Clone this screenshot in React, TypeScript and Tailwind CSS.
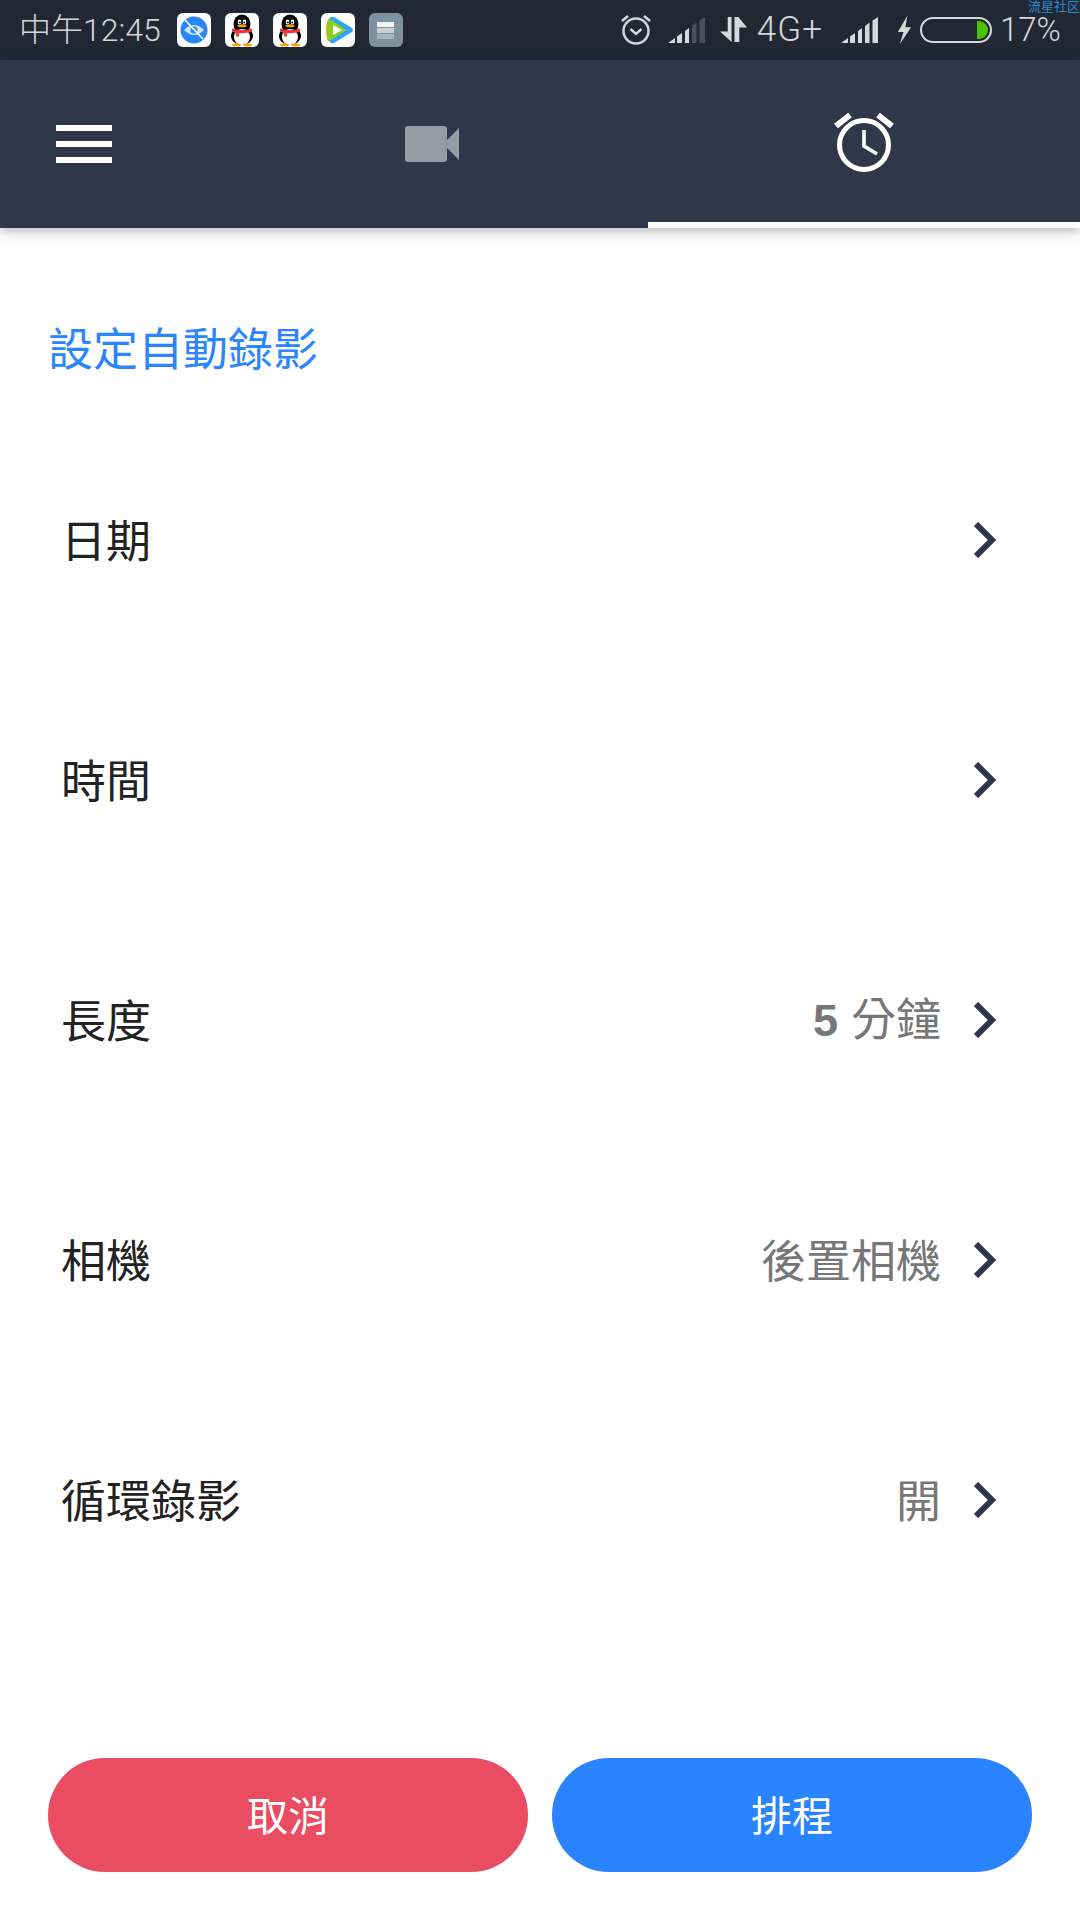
import React from 'react';

const cjk = { fontFamily: '"Noto Sans CJK TC", "Noto Sans", sans-serif' };

const rows = [
  { label: '日期', value: null },
  { label: '時間', value: null },
  { label: '長度', value: '5 分鐘' },
  { label: '相機', value: '後置相機' },
  { label: '循環錄影', value: '開' },
];

const AppTile: React.FC<{ children: React.ReactNode }> = ({ children }) => (
  <div className="w-[34px] h-[34px] rounded-[6px] overflow-hidden bg-white">
    <svg viewBox="0 0 34 34" className="w-full h-full">{children}</svg>
  </div>
);

const Penguin = () => (
  <>
    <ellipse cx="17" cy="23" rx="11" ry="9" fill="#000" />
    <ellipse cx="17" cy="11" rx="8.5" ry="9.5" fill="#000" />
    <ellipse cx="17" cy="24" rx="8" ry="8" fill="#fff" />
    <ellipse cx="14.5" cy="9" rx="1.8" ry="2.4" fill="#fff" />
    <ellipse cx="19.5" cy="9" rx="1.8" ry="2.4" fill="#fff" />
    <circle cx="14.8" cy="9.4" r="0.9" fill="#000" />
    <circle cx="19.2" cy="9.4" r="0.9" fill="#000" />
    <ellipse cx="17" cy="12.8" rx="4.6" ry="1.5" fill="#f5a40c" />
    <path d="M7 15.5 Q17 18.5 27 15.5 L27 19 Q20 20.5 14 20 L14 23.5 L11 23.5 L11 19.5 L7 18.5 Z" fill="#ef3b36" />
    <ellipse cx="11.5" cy="32" rx="4.5" ry="1.4" fill="#f5a40c" />
    <ellipse cx="22.5" cy="32" rx="4.5" ry="1.4" fill="#f5a40c" />
  </>
);

const Signal: React.FC<{ dim?: boolean }> = ({ dim }) => (
  <svg width="37" height="26" viewBox="0 0 37 26">
    <path d="M0 26 L7 21 L7 26 Z" fill="#d6d8db" />
    <path d="M9 19.5 L14 16 L14 26 L9 26 Z" fill="#d6d8db" />
    <path d="M17 14 L21 11 L21 26 L17 26 Z" fill="#d6d8db" />
    <path d="M24 9 L28.5 5.5 L28.5 26 L24 26 Z" fill={dim ? '#4a505c' : '#d6d8db'} />
    <path d="M31.5 3.5 L37 0 L37 26 L31.5 26 Z" fill={dim ? '#4a505c' : '#d6d8db'} />
  </svg>
);

const StatusBar = () => (
  <div className="relative h-[60px] bg-[#212833] flex items-center justify-between pl-[19px] pr-[19px] text-[#d4d6d9]">
    <span className="absolute top-[1px] right-0 text-[13px] leading-[12px] text-[#2a8ad8]" style={{ fontFamily: '"Liberation Sans", "Noto Sans CJK SC", sans-serif' }}>流星社区</span>
    <div className="flex items-center">
      <span className="text-[32px] leading-none font-light mr-[16px]" style={{ fontFamily: 'Roboto, "Noto Sans CJK SC", sans-serif' }}>中午12:45</span>
      <div className="flex items-center gap-[14px]">
        <AppTile>
          <circle cx="17" cy="17" r="13.5" fill="#2a85f5" />
          <path d="M7 17 Q17 7 27 17 Q17 27 7 17 Z" fill="#cfe2fb" />
          <circle cx="17" cy="17" r="3.6" fill="#2a85f5" />
          <path d="M8 7 L26 26" stroke="#fff" strokeWidth="1.6" />
        </AppTile>
        <AppTile><Penguin /></AppTile>
        <AppTile><Penguin /></AppTile>
        <AppTile>
          <path d="M7 6 Q3 17 7 28 L12 28 L12 6 Z" fill="#f98c0c" />
          <path d="M8 8 Q8 3 13 4 L31 15 Q33 17 31 19 L13 30 Q8 31 8 26 Z" fill="#2ea6f5" />
          <path d="M6 10 Q6 6 10 7 L24 16 Q26 17 24 18 L10 27 Q6 28 6 24 Z" fill="#8ccf1e" />
          <path d="M12 12 L21 17 L12 22 Z" fill="#fff" />
        </AppTile>
        <div className="w-[34px] h-[34px] rounded-[6px] bg-[#7e919e] flex flex-col items-center justify-center gap-[1px]">
          <div className="w-[17px] h-[5px] bg-[#f2f4f5]" />
          <div className="w-[17px] h-[5px] bg-[#c9d1d6]" />
          <div className="w-[17px] h-[5px] bg-[#a9b5bd]" />
        </div>
      </div>
    </div>
    <div className="flex items-center">
      <svg width="32" height="32" viewBox="0 0 32 32" className="mr-[16px] mb-[2px]" fill="none" stroke="#d6d8db">
        <circle cx="16" cy="18" r="12.5" strokeWidth="2.4" />
        <path d="M10.5 16 L16 21 L21.5 16" strokeWidth="2.4" />
        <path d="M2 8 L8 3 M24 3 L30 8" strokeWidth="2.6" />
      </svg>
      <Signal dim />
      <svg width="27" height="27" viewBox="0 0 28 28" className="ml-[15px] mr-[10px]" fill="#d6d8db">
        <path d="M8 0 H12 V26 L0 15 H8 Z" />
        <path d="M15 26 V0 H19 L28 11 H20 V26 Z" />
      </svg>
      <span className="text-[35px] leading-[30px] font-light tracking-[1px] mr-[18px]" style={{ fontFamily: 'Roboto, sans-serif' }}>4G+</span>
      <Signal />
      <svg width="17" height="30" viewBox="0 0 18 30" className="ml-[18px] mr-[7px]" fill="#d6d8db">
        <path d="M12 0 L2 17 H8 L4 30 L16 12 H10 Z" />
      </svg>
      <div className="w-[72px] h-[26px] rounded-full border-[2px] border-[#d6d8db] flex justify-end items-center pr-[2px] mr-[8px]">
        <div className="w-[11px] h-[18px] bg-[#4bc400] rounded-r-[9px]" />
      </div>
      <span className="text-[33px] leading-[30px] font-light" style={{ fontFamily: 'Roboto, sans-serif' }}>17%</span>
    </div>
  </div>
);

const Header = () => (
  <div className="relative h-[168px] bg-[#2f3849] grid grid-cols-[216px_432px_432px] shadow-[0_4px_10px_rgba(0,0,0,0.25)]">
    <div className="flex items-center pl-[56px]">
      <div className="w-[56px] flex flex-col gap-[10px]">
        <div className="h-[6px] bg-white" />
        <div className="h-[6px] bg-white" />
        <div className="h-[6px] bg-white" />
      </div>
    </div>
    <div className="flex items-center justify-center">
      <svg width="54" height="36" viewBox="0 0 54 36" fill="#979ba3">
        <rect width="42" height="36" rx="3" />
        <path d="M42 14 L54 2 V34 L42 22 Z" />
      </svg>
    </div>
    <div className="flex items-center justify-center border-b-[6px] border-white">
      <svg width="60" height="60" viewBox="0 0 60 60" fill="none" stroke="#fff" className="mt-[2px]">
        <circle cx="30" cy="33" r="24.5" strokeWidth="5" />
        <path d="M30 18 V34 L43 42" strokeWidth="3.6" />
        <path d="M2 14 L16 3 M44 3 L58 14" strokeWidth="6" />
      </svg>
    </div>
  </div>
);

export default function App() {
  return (
    <div className="w-[1080px] h-[1920px] bg-white flex flex-col overflow-hidden" style={cjk}>
      <StatusBar />
      <Header />
      <div className="h-[192px] flex items-end pl-[48px] pb-[49px]">
        <h1 className="text-[45px] leading-[48px] font-normal text-[#2a85fe]">設定自動錄影</h1>
      </div>
      <div className="flex flex-col">
        {rows.map(row => (
          <div key={row.label} className="h-[240px] flex items-center justify-between pl-[61px] pr-[84px]">
            <span className="text-[45px] text-[#222222] pb-[3px]">{row.label}</span>
            <div className="flex items-center">
              {row.value && (
                <span className="text-[45px] text-[#777777] mr-[33px] pb-[3px]">
                  {row.value.startsWith('5') ? (
                    <><b className="font-bold mr-[3px]" style={{ fontFamily: '"Liberation Sans", sans-serif' }}>5</b> 分鐘</>
                  ) : row.value}
                </span>
              )}
              <svg width="22" height="36" viewBox="0 0 22 36" fill="none" stroke="#2f3849" strokeWidth="6">
                <path d="M2 2 L18 18 L2 34" />
              </svg>
            </div>
          </div>
        ))}
      </div>
      <div className="flex gap-[24px] px-[48px] mt-[138px]">
        <button className="flex-1 h-[114px] rounded-full bg-[#ea4c62] text-white text-[41px] pb-[2px]">取消</button>
        <button className="flex-1 h-[114px] rounded-full bg-[#2a83ff] text-white text-[41px] pb-[2px]">排程</button>
      </div>
    </div>
  );
}
